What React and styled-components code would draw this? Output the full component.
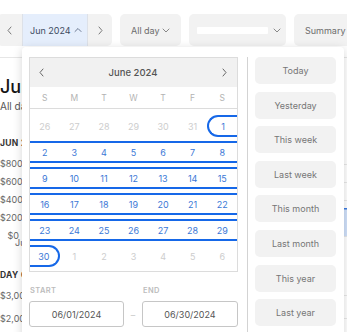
import React from "react";
import styled, { createGlobalStyle, css } from "styled-components";

const GlobalStyle = createGlobalStyle`
  html, body { margin: 0; padding: 0; background: #fff; }
  body {
    font-family: Inter, "Noto Sans", sans-serif;
    width: 347px; height: 332px; overflow: hidden;
  }
  * { box-sizing: border-box; }
`;

const Page = styled.div`
  position: relative;
  width: 347px;
  height: 332px;
  overflow: hidden;
`;

/* ---------- toolbar ---------- */
const Toolbar = styled.div`
  display: flex;
  gap: 8px;
  margin-left: -3px;
  width: 400px;
  padding: 14px 0 11px;
  border-bottom: 1px solid #e6e6e6;
`;

const Group = styled.div`
  display: flex;
  height: 32px;
  background: #f2f2f2;
  border-radius: 5px;
  overflow: hidden;
  flex: none;
`;

const NavButton = styled.div`
  width: ${(p) => p.$w}px;
  display: flex;
  align-items: center;
  justify-content: center;
`;

const MonthButton = styled.div`
  width: 66px;
  display: flex;
  align-items: center;
  gap: 3px;
  padding: 0 0 0 7px;
  background: #e5eefc;
  border-left: 1px solid #dde1e8;
  border-right: 1px solid #dde1e8;
  font-size: 9px;
  color: #3e4c62;
  white-space: nowrap;
`;

const Pill = styled.div`
  flex: none;
  display: flex;
  align-items: center;
  gap: ${(p) => p.$gap ?? 2}px;
  width: ${(p) => (p.$w ? `${p.$w}px` : "auto")};
  height: 32px;
  padding: 0 0 0 ${(p) => p.$pl ?? 11}px;
  background: #f2f2f2;
  border-radius: 5px;
  font-size: 9px;
  color: #6d6d6d;
  white-space: nowrap;
`;

const Redacted = styled.span`
  display: block;
  width: 71px;
  height: 7px;
  background: #fff;
  border-radius: 1px;
`;

/* ---------- page content behind popover ---------- */
const Content = styled.div``;

const Heading = styled.h1`
  margin: 20px 0 0;
  font-size: 18px;
  line-height: 18px;
  font-weight: 500;
  color: #151515;
  white-space: nowrap;
`;

const Sub = styled.div`
  margin-top: 4px;
  font-size: 10px;
  line-height: 12px;
  color: #555;
  white-space: nowrap;
`;

const SectionTitle = styled.div`
  margin-top: ${(p) => p.$mt}px;
  font-size: 8.5px;
  line-height: 11px;
  font-weight: 700;
  letter-spacing: 0.3px;
  color: #333;
  text-transform: uppercase;
  white-space: nowrap;
`;

const Chart = styled.div`
  margin-top: ${(p) => p.$mt}px;
  display: grid;
  grid-template-columns: 19px 1fr;
  column-gap: 4px;
`;

const AxisColumn = styled.div`
  display: flex;
  flex-direction: column;
`;

const AxisLabel = styled.div`
  height: ${(p) => p.$h}px;
  line-height: ${(p) => p.$h}px;
  text-align: right;
  font-size: 9px;
  color: #666;
  white-space: nowrap;
  direction: rtl;
  unicode-bidi: plaintext;
`;

const XLabel = styled.div`
  margin: -7px 0 0 15px;
  height: 10px;
  line-height: 10px;
  font-size: 9px;
  color: #666;
  white-space: nowrap;
`;

/* ---------- popover ---------- */
const Popover = styled.div`
  position: absolute;
  left: 22px;
  top: 47px;
  width: 322px;
  height: 300px;
  background: #fff;
  border-radius: 4px;
  box-shadow: 0 2px 10px rgba(0, 0, 0, 0.17);
  display: flex;
  padding: 10px 8px 0 7px;
`;

const LeftCol = styled.div`
  width: 209px;
  flex: none;
  display: flex;
  flex-direction: column;
`;

const Divider = styled.div`
  width: 1px;
  flex: none;
  background: #d3d3d3;
  margin: 0 7px 0 9px;
`;

const Presets = styled.div`
  width: 81px;
  flex: none;
  display: flex;
  flex-direction: column;
  gap: 7.6px;
`;

const PresetButton = styled.div`
  height: 27px;
  display: flex;
  align-items: center;
  justify-content: center;
  background: #f2f2f2;
  border-radius: 5px;
  font-size: 9px;
  color: #767676;
`;

const Calendar = styled.div`
  border: 1px solid #dcdcdc;
`;

const CalHeader = styled.div`
  height: 29px;
  background: #f1f1f1;
  display: flex;
  align-items: center;
  justify-content: space-between;
  padding: 0 9px 0 8px;
  font-size: 9.5px;
  font-weight: 500;
  color: #555;
`;

const WeekGrid = styled.div`
  display: grid;
  grid-template-columns: repeat(7, 1fr);
`;

const WeekdayRow = styled(WeekGrid)`
  height: 22px;
  border-bottom: 1px solid #dcdcdc;
  align-items: center;
`;

const Weekday = styled.div`
  text-align: center;
  font-size: 8.5px;
  color: #b3b3b3;
`;

const Weeks = styled.div`
  display: flex;
  flex-direction: column;
  gap: 4px;
  padding: 6px 0 4px;
`;

const BLUE = "#1668e8";

const Day = styled.div`
  height: 22px;
  display: flex;
  align-items: center;
  justify-content: center;
  font-size: 9px;
  color: ${(p) => (p.$outside ? "#cdcdcd" : "#3b78d6")};
  ${(p) =>
    p.$inRange &&
    css`
      border-top: 2px solid ${BLUE};
      border-bottom: 2px solid ${BLUE};
    `}
  ${(p) =>
    p.$start &&
    css`
      border-left: 2px solid ${BLUE};
      border-radius: 11px 0 0 11px;
    `}
  ${(p) =>
    p.$end &&
    css`
      border-right: 2px solid ${BLUE};
      border-radius: 0 11px 11px 0;
    `}
`;

const FieldGrid = styled.div`
  display: grid;
  grid-template-columns: 95px 18px 96px;
  margin-top: ${(p) => p.$mt}px;
`;

const FieldLabel = styled.div`
  font-size: 7.5px;
  font-weight: 600;
  letter-spacing: 0.4px;
  color: #bcbcbc;
  padding-left: 1px;
`;

const DateInput = styled.div`
  height: 26px;
  border: 1px solid #c6c6c6;
  border-radius: 3px;
  display: flex;
  align-items: center;
  justify-content: center;
  font-size: 9px;
  color: #555;
`;

const Dash = styled.div`
  display: flex;
  align-items: center;
  justify-content: center;
  font-size: 9px;
  color: #c8c8c8;
`;

/* ---------- icons ---------- */
const paths = {
  left: "M5 1 L2 4.5 L5 8",
  right: "M3 1 L6 4.5 L3 8",
  up: "M1 5.5 L4 2.5 L7 5.5",
  down: "M1 3 L4 6 L7 3",
};

const Chevron = ({ dir, size = 8, color = "#777", w = 1 }) => (
  <svg width={size} height={size + 1} viewBox="0 0 8 9" fill="none">
    <path d={paths[dir]} stroke={color} strokeWidth={w} strokeLinecap="round" strokeLinejoin="round" />
  </svg>
);

/* ---------- data ---------- */
const weekdays = ["S", "M", "T", "W", "T", "F", "S"];

const weeks = [
  [26, 27, 28, 29, 30, 31, 1],
  [2, 3, 4, 5, 6, 7, 8],
  [9, 10, 11, 12, 13, 14, 15],
  [16, 17, 18, 19, 20, 21, 22],
  [23, 24, 25, 26, 27, 28, 29],
  [30, 1, 2, 3, 4, 5, 6],
];

const presets = [
  "Today",
  "Yesterday",
  "This week",
  "Last week",
  "This month",
  "Last month",
  "This year",
  "Last year",
];

const dayInfo = (wi, d) => {
  const outside = (wi === 0 && d > 7) || (wi === 5 && d < 7);
  return {
    outside,
    inRange: !outside,
    start: wi === 0 && d === 1,
    end: wi === 5 && d === 30,
  };
};

const revenueAxis = ["$800", "$600", "$400", "$200", "$0"];

export default function App() {
  return (
    <Page>
      <GlobalStyle />
      <Toolbar>
        <Group>
          <NavButton $w={25}>
            <Chevron dir="left" color="#7a7a7a" />
          </NavButton>
          <MonthButton>
            Jun 2024
            <Chevron dir="up" color="#6b7890" />
          </MonthButton>
          <NavButton $w={24}>
            <Chevron dir="right" color="#7a7a7a" />
          </NavButton>
        </Group>
        <Pill $w={61}>
          All day
          <Chevron dir="down" color="#888" />
        </Pill>
        <Pill $w={97} $pl={8} $gap={5}>
          <Redacted />
          <Chevron dir="down" color="#888" />
        </Pill>
        <Pill $w={70}>Summary</Pill>
      </Toolbar>

      <Content>
        <Heading>June 2024</Heading>
        <Sub>All day · Jun 1 – Jun 30, 2024</Sub>
        <SectionTitle $mt={26}>Jun 2024 revenue</SectionTitle>
        <Chart $mt={6}>
          <AxisColumn>
            {revenueAxis.map((l) => (
              <AxisLabel key={l} $h={18}>
                {l}
              </AxisLabel>
            ))}
          </AxisColumn>
          <svg width="324" height="90" viewBox="0 0 324 90">
            {[9, 27, 45, 63, 81].map((y) => (
              <line key={y} x1="0" x2="324" y1={y + 0.5} y2={y + 0.5} stroke="#e8e8e8" />
            ))}
            <rect x="321" y="53" width="6" height="28" fill="#cfe0fa" />
            <rect x="321" y="53" width="6" height="1.5" fill="#3b7ae0" />
          </svg>
        </Chart>
        <XLabel>Jun 1</XLabel>
        <SectionTitle $mt={22}>Day of week</SectionTitle>
        <Chart $mt={3}>
          <AxisColumn>
            <AxisLabel $h={23}>$3,000</AxisLabel>
            <AxisLabel $h={23}>$2,000</AxisLabel>
          </AxisColumn>
          <svg width="324" height="46" viewBox="0 0 324 46">
            <line x1="0" x2="324" y1="11.5" y2="11.5" stroke="#e8e8e8" />
            <line x1="0" x2="324" y1="34.5" y2="34.5" stroke="#e8e8e8" />
          </svg>
        </Chart>
      </Content>

      <Popover>
        <LeftCol>
          <Calendar>
            <CalHeader>
              <Chevron dir="left" color="#666" />
              June 2024
              <Chevron dir="right" color="#666" />
            </CalHeader>
            <WeekdayRow>
              {weekdays.map((w, i) => (
                <Weekday key={i}>{w}</Weekday>
              ))}
            </WeekdayRow>
            <Weeks>
              {weeks.map((week, wi) => (
                <WeekGrid key={wi}>
                  {week.map((d, di) => {
                    const info = dayInfo(wi, d);
                    return (
                      <Day
                        key={di}
                        $outside={info.outside}
                        $inRange={info.inRange}
                        $start={info.start}
                        $end={info.end}
                      >
                        {d}
                      </Day>
                    );
                  })}
                </WeekGrid>
              ))}
            </Weeks>
          </Calendar>
          <FieldGrid $mt={14}>
            <FieldLabel>START</FieldLabel>
            <span />
            <FieldLabel>END</FieldLabel>
          </FieldGrid>
          <FieldGrid $mt={6}>
            <DateInput>06/01/2024</DateInput>
            <Dash>–</Dash>
            <DateInput>06/30/2024</DateInput>
          </FieldGrid>
        </LeftCol>
        <Divider />
        <Presets>
          {presets.map((p) => (
            <PresetButton key={p}>{p}</PresetButton>
          ))}
        </Presets>
      </Popover>
    </Page>
  );
}
